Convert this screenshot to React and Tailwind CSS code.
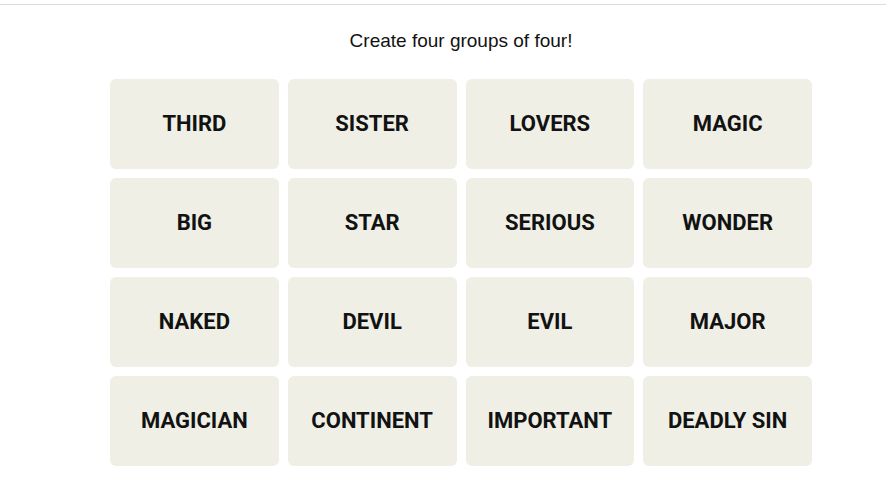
import React from "react";

const words = [
    "THIRD", "SISTER", "LOVERS", "MAGIC",
    "BIG", "STAR", "SERIOUS", "WONDER",
    "NAKED", "DEVIL", "EVIL", "MAJOR",
    "MAGICIAN", "CONTINENT", "IMPORTANT", "DEADLY SIN",
];

export default function App() {
    return (
        <div className="w-full h-[480px] bg-white overflow-hidden">
            <div className="h-[5px] border-b border-[#dcdcdc]" />
            <div className="ml-[110px] w-[702px]">
                <p className="h-[74px] flex items-center justify-center pb-[1px] font-['Liberation_Sans',sans-serif] text-[19px] text-[#121212]">
                    Create four groups of four!
                </p>
                <div className="grid grid-cols-4 gap-[9px]">
                    {words.map((w) => (
                        <button
                            key={w}
                            className="h-[90px] rounded-[6px] bg-[#efefe6] flex items-center justify-center pb-[2px] font-['Roboto',sans-serif] font-bold text-[22px] text-[#121212]"
                        >
                            {w}
                        </button>
                    ))}
                </div>
            </div>
        </div>
    );
}
